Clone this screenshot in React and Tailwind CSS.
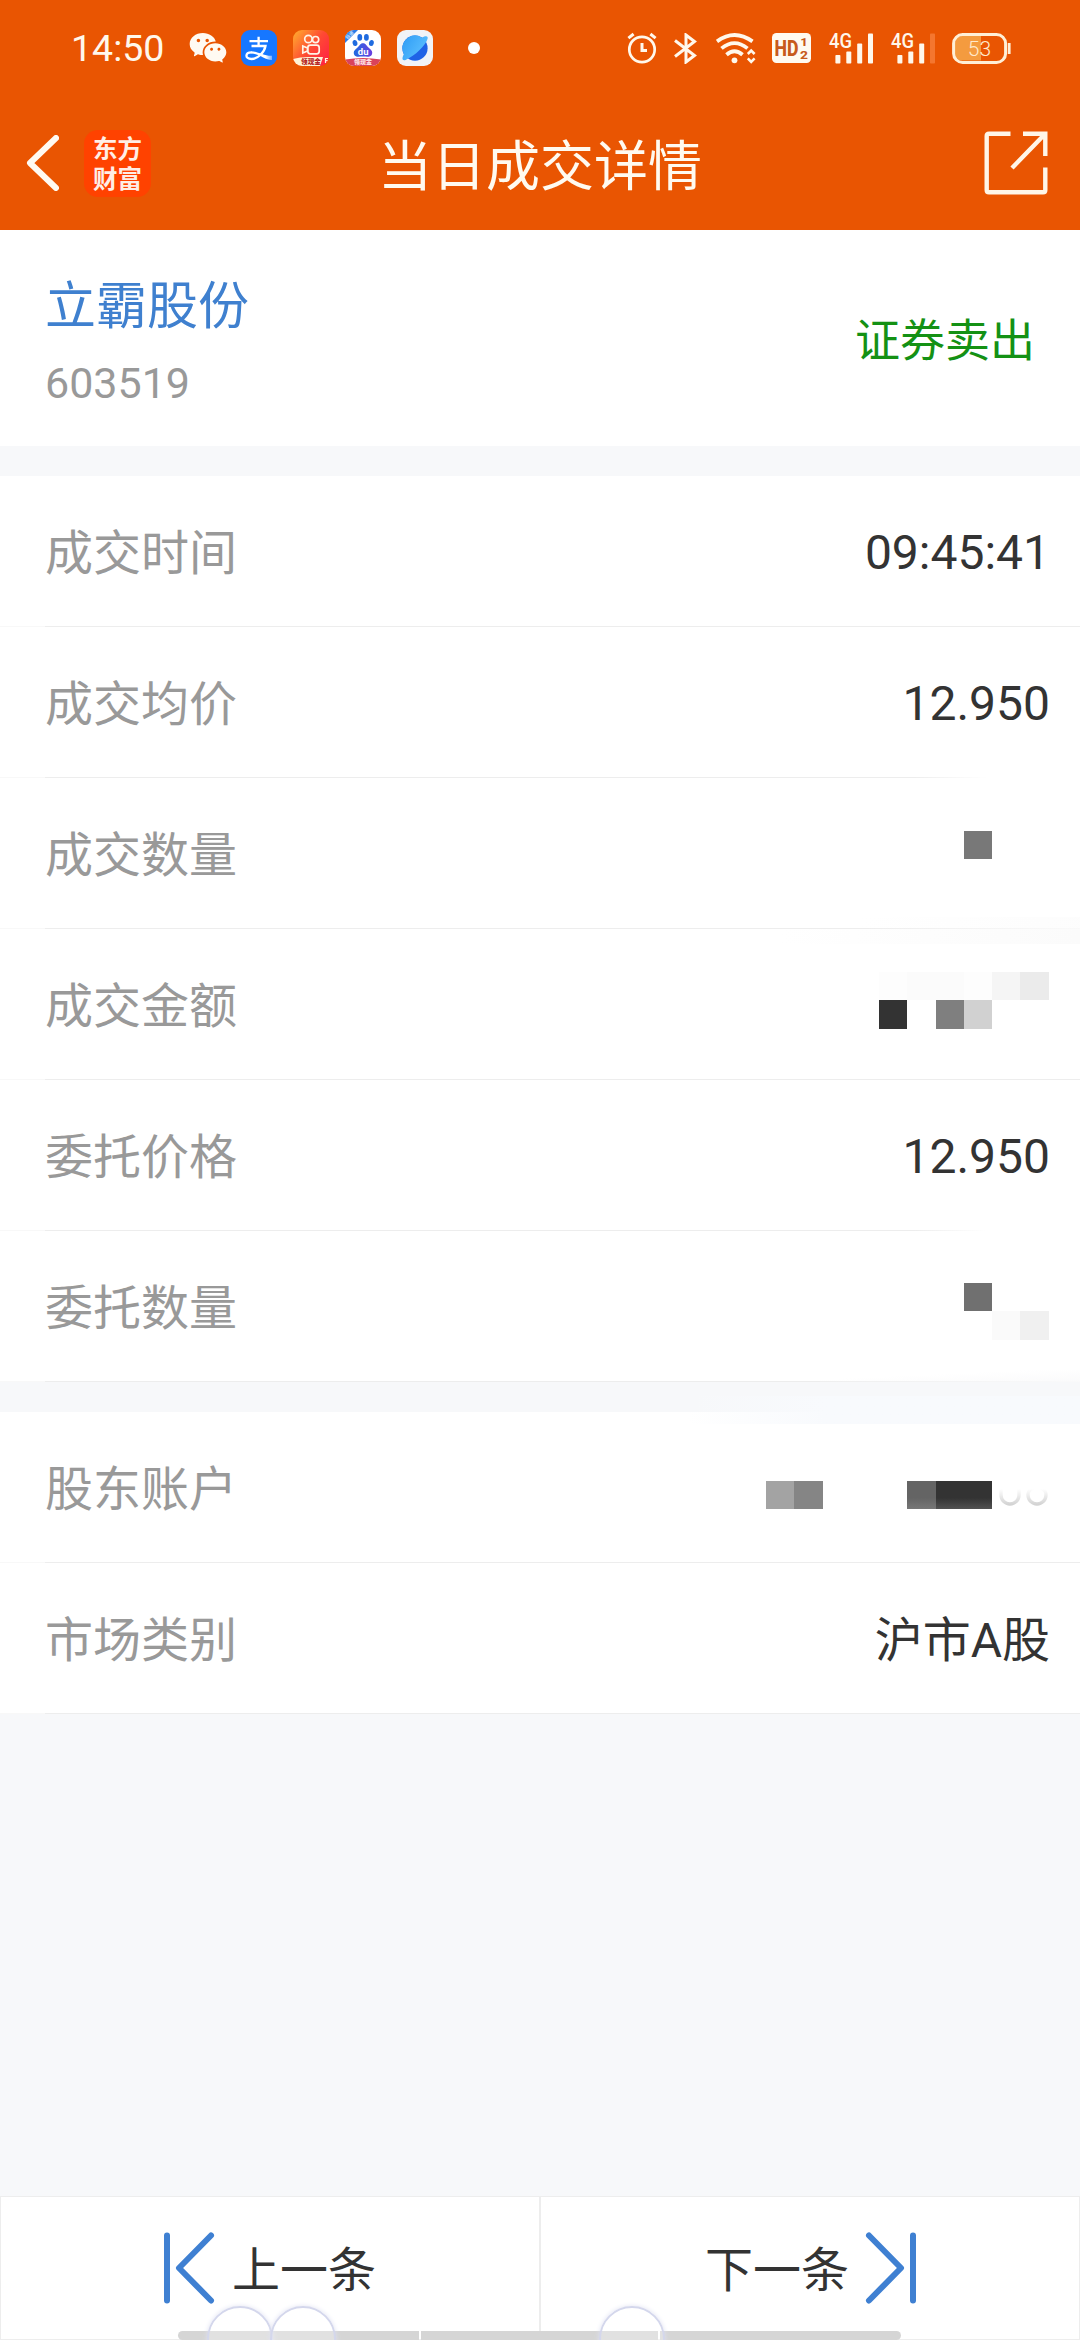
import React from "react";
import { RiWechatFill } from "react-icons/ri";

const sans = "font-['Roboto','Noto_Sans_CJK_SC',sans-serif]";
const cjk = "font-['Noto_Sans_CJK_SC',sans-serif]";

function AlipayIcon() {
  return (
    <svg viewBox="0 0 36 36" className="size-9">
      <defs>
        <linearGradient id="swoosh" x1="0" x2="1">
          <stop offset="0.7" stopColor="#fff" />
          <stop offset="1" stopColor="#fff" stopOpacity="0.4" />
        </linearGradient>
      </defs>
      <rect width="36" height="36" rx="9" fill="#1677ff" />
      <g fill="none" stroke="#fff" strokeWidth="2.3">
        <path d="M8.5 11.2H27M17.6 6.8V15.6M10.5 16H24.5C23.5 22 17 29 10.5 29C3.5 29 4 22.3 10.5 22.3" />
      </g>
      <path d="M10 21.2C17 21.4 23 26.2 31 25.8V30C24 30 18 23.6 10 23.4Z" fill="url(#swoosh)" />
    </svg>
  );
}

function KuaishouIcon() {
  return (
    <svg viewBox="0 0 36 36" className="size-9">
      <defs>
        <linearGradient id="ks" x1="0" y1="0" x2="1" y2="0.8">
          <stop offset="0" stopColor="#ffb02e" />
          <stop offset="0.55" stopColor="#ff4a33" />
          <stop offset="1" stopColor="#ff2442" />
        </linearGradient>
        <clipPath id="ksClip"><rect width="36" height="36" rx="9" /></clipPath>
      </defs>
      <g clipPath="url(#ksClip)">
        <rect width="36" height="36" fill="url(#ks)" />
        <g fill="none" stroke="#fff3e6" strokeWidth="1.7">
          <circle cx="15.4" cy="9" r="3.7" />
          <circle cx="22.6" cy="9.6" r="3.1" />
          <rect x="14.8" y="15.2" width="11.4" height="8.6" rx="2.6" />
          <path d="M14.5 18L9.8 16V23L14.5 21Z" />
        </g>
        <path d="M0 29Q8 26.6 18 27H30L27 36H0Z" fill="#fff3d6" />
        <text x="18" y="34" textAnchor="middle" fontSize="6.6" fontWeight="900" fill="#b3211c" fontFamily="Noto Sans CJK SC">领现金</text>
        <path d="M32.5 33V28.5H35M32.5 30.6H34.6" stroke="#fff3d6" strokeWidth="1.2" fill="none" />
      </g>
    </svg>
  );
}

function BaiduIcon() {
  return (
    <svg viewBox="0 0 36 36" className="size-9">
      <defs>
        <clipPath id="bdClip"><rect width="36" height="36" rx="9" /></clipPath>
        <linearGradient id="bd" x1="0" x2="1">
          <stop offset="0" stopColor="#1f6be0" />
          <stop offset="1" stopColor="#6a3fe0" />
        </linearGradient>
      </defs>
      <g clipPath="url(#bdClip)">
        <rect width="36" height="36" fill="#fff" />
        <path d="M0 0H13L0 13Z" fill="#2a7be8" />
        <text x="0" y="0" transform="translate(2.6 9.6) rotate(-45)" fontSize="4.6" fontWeight="700" fill="#bfe0ff" fontFamily="Noto Sans CJK SC">极速</text>
        <g fill="#1f6be0">
          <ellipse cx="10" cy="13" rx="2.4" ry="3.1" transform="rotate(-12 10 13)" />
          <ellipse cx="14.8" cy="7.4" rx="2.4" ry="3.3" />
          <ellipse cx="21.4" cy="7.4" rx="2.4" ry="3.3" />
          <ellipse cx="26.4" cy="13" rx="2.4" ry="3.1" transform="rotate(12 26.4 13)" />
        </g>
        <path d="M18 13.2C21 13.2 21.6 16 24 18C27 20.4 28 22 26.8 24.8C25.4 27.6 22 26.6 18 26.6S10.6 27.6 9.2 24.8C8 22 9 20.4 12 18C14.4 16 15 13.2 18 13.2Z" fill="url(#bd)" />
        <text x="18.2" y="25" textAnchor="middle" fontSize="9.5" fontWeight="700" fill="#fff" fontFamily="Roboto">du</text>
        <path d="M0 29.5Q18 26.5 36 29.5V36H0Z" fill="#d9435c" />
        <text x="18" y="34.2" textAnchor="middle" fontSize="6" fontWeight="900" fill="#ffe3e6" fontFamily="Noto Sans CJK SC">领现金</text>
      </g>
    </svg>
  );
}

function BrowserIcon() {
  return (
    <svg viewBox="0 0 36 36" className="size-9">
      <defs>
        <linearGradient id="pl" x1="0" y1="0" x2="1" y2="0.6">
          <stop offset="0" stopColor="#2f9cf5" />
          <stop offset="1" stopColor="#5cc0ff" />
        </linearGradient>
      </defs>
      <rect width="36" height="36" rx="9" fill="#f1f3f7" />
      <circle cx="18" cy="18.2" r="12.6" fill="#1f62e6" />
      <path d="M5.6 20.5A12.6 12.6 0 0 1 25 7.7C29 5.2 31.4 6 30.6 8.8C28.6 15.4 18 26 8.6 29.9C5.2 31 4.6 28.6 6.8 24.2Z" fill="url(#pl)" />
    </svg>
  );
}

function AlarmIcon() {
  return (
    <svg viewBox="0 0 30 32" className="h-8 w-[30px]" fill="none" stroke="#fff8ec">
      <circle cx="15" cy="17.5" r="12.7" strokeWidth="2.7" />
      <path d="M15 11V18.5H20" strokeWidth="3" />
      <path d="M1.4 6.2L6.6 2M28.6 6.2L23.4 2" strokeWidth="3" />
    </svg>
  );
}

function BluetoothIcon() {
  return (
    <svg viewBox="0 0 23 31" className="h-[31px] w-[23px]" fill="none" stroke="#fff8ec" strokeWidth="3">
      <path d="M1 7.5L20.5 22.5L12 29V2L20.5 8.5L1 23.5" />
    </svg>
  );
}

function WifiIcon() {
  return (
    <svg viewBox="0 0 40 31" className="h-[31px] w-10" fill="none" stroke="#fff8ec" strokeWidth="3.8">
      <path d="M1 8.4Q18.5 -4.4 36.5 8.4" />
      <path d="M5.5 15.4Q18.5 4.8 31.5 15.4" />
      <path d="M10.5 21.8Q18.5 14.8 26.5 21.8" />
      <circle cx="18.5" cy="27.3" r="2.9" fill="#fff8ec" stroke="none" />
      <path d="M31.8 21L35.2 17.6L38.6 21M31.8 25.4L35.2 28.8L38.6 25.4" strokeWidth="2.6" />
    </svg>
  );
}

function HdIcon() {
  return (
    <svg viewBox="0 0 39 30" className="h-[30px] w-[39px] overflow-visible">
      <rect width="39" height="30" rx="4.5" fill="#fffaf0" />
      <text x="2.4" y="23.2" fontSize="22.5" fontWeight="800" fill="#c75a1c" textLength="24" lengthAdjust="spacingAndGlyphs" fontFamily="Roboto">HD</text>
      <text x="28.2" y="13.2" fontSize="11" fontWeight="800" fill="#c75a1c" textLength="7.500" lengthAdjust="spacingAndGlyphs" fontFamily="Roboto">1</text>
      <text x="28" y="26" fontSize="11" fontWeight="800" fill="#c75a1c" textLength="8" lengthAdjust="spacingAndGlyphs" fontFamily="Roboto">2</text>
    </svg>
  );
}

function SignalIcon({ last }) {
  return (
    <svg viewBox="0 0 45 31" className="h-[31px] w-[45px] overflow-visible" fill="#fff8ec">
      <text x="0" y="15" fontSize="20" fontWeight="500" textLength="23" lengthAdjust="spacingAndGlyphs" fontFamily="Roboto">4G</text>
      <rect x="6.4" y="22" width="5" height="8.6" rx="0.8" />
      <rect x="17.3" y="18.6" width="5" height="12" rx="0.8" />
      <rect x="28.2" y="10.6" width="5" height="20" rx="0.8" />
      <rect x="39" y="0.5" width="5" height="30" rx="0.8" fill={last} />
    </svg>
  );
}

function BatteryIcon() {
  return (
    <svg viewBox="0 0 60 31" className="h-[31px] w-[60px]">
      <path d="M10 3H29V27.6H10A7 7 0 0 1 3 20V10A7 7 0 0 1 10 3Z" fill="#f49b3f" />
      <rect x="1.6" y="1.6" width="52" height="27.8" rx="9" fill="none" stroke="#ffefd6" strokeWidth="3" />
      <path d="M57.2 10V21" stroke="#ffefd6" strokeWidth="2.8" />
      <text x="27.4" y="22.6" textAnchor="middle" fontSize="21" fontWeight="300" fill="#ffe9cb" fontFamily="Roboto">53</text>
    </svg>
  );
}

function StatusBar() {
  return (
    <div className="flex h-24 items-center pr-[68px] pl-[71px]">
      <div className={`${sans} w-[117px] text-[37.5px] leading-[40px] text-[#fff8ec]`}>14:50</div>
      <RiWechatFill className="mr-[13px] size-10 text-[#fffaf2]" />
      <div className="flex gap-4">
        <AlipayIcon />
        <KuaishouIcon />
        <BaiduIcon />
        <BrowserIcon />
      </div>
      <div className="ml-[35px] size-3 rounded-full bg-white" />
      <div className="ml-auto flex items-center">
        <AlarmIcon />
        <div className="ml-[17px]"><BluetoothIcon /></div>
        <div className="ml-[19px]"><WifiIcon /></div>
        <div className="ml-4"><HdIcon /></div>
        <div className="ml-[18px]"><SignalIcon last="#fff8ec" /></div>
        <div className="ml-[17px]"><SignalIcon last="#f4762f" /></div>
        <div className="ml-4"><BatteryIcon /></div>
      </div>
    </div>
  );
}

function NavBar() {
  return (
    <div className="flex h-[134px] items-center justify-between pr-[32px] pl-[26px]">
      <div className="flex w-[131px] items-center gap-[25px]">
        <svg viewBox="0 0 33 56" className="h-14 w-[33px] shrink-0" fill="none" stroke="#fffaf2" strokeWidth="6" strokeLinecap="round" strokeLinejoin="round">
          <path d="M30 3L4 28L30 53" />
        </svg>
        <div className="flex size-[67px] flex-col items-center justify-center rounded-[14px] bg-[#ff4200] font-['Noto_Sans_CJK_SC',sans-serif] text-[24.5px] leading-[30px] font-bold text-[#ffeee6]">
          <span>东方</span>
          <span>财富</span>
        </div>
      </div>
      <div className={`${cjk} text-[54px] leading-[60px] text-[#fffaf0]`}>当日成交详情</div>
      <div className="flex w-[125px] justify-end">
        <svg viewBox="0 0 64 64" className="size-16" fill="none" stroke="#fff6e8" strokeWidth="4.4">
          <path d="M26.500 2.700H5Q2.700 2.700 2.700 5V59Q2.700 61.300 5 61.300H59Q61.300 61.300 61.300 59V36.500" />
          <path d="M39 2.700H61.300V25M61 3L28 37" />
        </svg>
      </div>
    </div>
  );
}

function Divider({ fade }) {
  return (
    <div className="flex h-px">
      <div className="w-[45px] bg-[#f8f8f8]" />
      <div className={fade ? "flex-1 bg-linear-to-r from-[#ededed] from-84% to-white to-91%" : "flex-1 bg-[#ededed]"} />
    </div>
  );
}

function Row({ label, value, numeric, fade, children }) {
  return (
    <div className="relative flex h-[151px] flex-col bg-white">
      <div className={`${sans} flex flex-1 items-center justify-between pr-[30px] pl-[45px] text-[48px] leading-[60px]`}>
        <span className="pt-[6px] text-[#999999]">{label}</span>
        <span className={numeric ? "pt-[3px] text-[#333333]" : "pt-[6px] text-[#333333]"}>{value}</span>
      </div>
      <Divider fade={fade} />
      {children}
    </div>
  );
}

function PagerButton({ children }) {
  return (
    <div className={`${cjk} flex h-36 flex-1 border border-[#ededed] bg-white text-[48px] leading-[60px] text-[#333333]`}>
      {children}
    </div>
  );
}

function Ring({ className }) {
  return <div className={`absolute top-[110px] size-[66px] rounded-full border-2 border-[#d4d7ec] bg-white/30 shadow-[0_0_5px_#dfe1f2] ${className}`} />;
}

export default function App() {
  return (
    <div className="flex h-[2340px] w-[1080px] flex-col overflow-hidden bg-[#f7f8fa]">
      <header className="h-[230px] bg-[#e95502]">
        <StatusBar />
        <NavBar />
      </header>

      <section className="mb-[30px] flex h-[216px] items-center justify-between bg-white pr-[45px] pl-[45px]">
        <div className="pt-[8px]">
          <div className={`${cjk} text-[51px] leading-[60px] text-[#3f80cf]`}>立霸股份</div>
          <div className={`${sans} mt-[21px] text-[43px] leading-[60px] text-[#999999]`}>603519</div>
        </div>
        <div className={`${cjk} text-[45px] leading-[60px] text-[#149114]`}>证券卖出</div>
      </section>

      <section>
        <Row label="成交时间" value="09:45:41" numeric />
        <Row label="成交均价" value="12.950" numeric fade />
        <Row label="成交数量">
          <div className="absolute top-[53px] right-[88px] size-7 bg-[#787878]" />
          <div className="absolute right-0 bottom-0 h-3 w-[220px] bg-linear-to-r from-transparent to-[#fcfcfc]/80" />
        </Row>
        <Row label="成交金额">
          <div className="absolute top-0 right-0 h-[15px] w-[300px] bg-linear-to-r from-white to-[#fbfbfb]" />
          <div className="absolute top-[43px] right-[31px] flex">
            <div className="h-7 w-7 bg-[#fdfdfd]" />
            <div className="h-7 w-[57px] bg-[#fbfbfb]" />
            <div className="h-7 w-7 bg-[#fdfdfd]" />
            <div className="h-7 w-7 bg-[#f5f5f5]" />
            <div className="h-7 w-[29px] bg-[#ebebeb]" />
          </div>
          <div className="absolute top-[71px] right-[88px] flex">
            <div className="h-[29px] w-7 bg-[#333333]" />
            <div className="ml-[29px] h-[29px] w-7 bg-[#7f7f7f]" />
            <div className="h-[29px] w-7 bg-[#d1d1d1]" />
          </div>
        </Row>
        <Row label="委托价格" value="12.950" numeric fade />
        <Row label="委托数量">
          <div className="absolute top-[52px] right-[88px] size-7 bg-[#707070]" />
          <div className="absolute top-[80px] right-[31px] flex">
            <div className="h-[29px] w-7 bg-[#fafafa]" />
            <div className="h-[29px] w-[29px] bg-[#f0f0f0]" />
          </div>
          <div className="absolute right-0 bottom-0 h-3 w-[260px] bg-linear-to-br from-transparent from-40% to-[#fafafb]" />
        </Row>
      </section>

      <section className="mt-[30px]">
        <Row label="股东账户">
          <div className="absolute -top-4 right-0 h-7 w-[392px] bg-linear-to-r from-transparent to-[#f8fafd] to-35%" />
          <div className="absolute top-[69px] right-[257px] flex">
            <div className="h-7 w-7 bg-[#a3a3a3]" />
            <div className="h-7 w-[29px] bg-[#858585]" />
          </div>
          <div className="absolute top-[69px] right-[88px] flex">
            <div className="h-7 w-[29px] bg-linear-to-b from-[#646464] from-60% to-[#777777]" />
            <div className="h-7 w-14 bg-linear-to-b from-[#333333] from-60% to-[#525252]" />
          </div>
          <svg viewBox="0 0 56 28" className="absolute top-[69px] right-[32px] h-7 w-14" fill="none" strokeWidth="3.4">
            <defs>
              <linearGradient id="digitFade" x1="0" x2="0" y1="8" y2="25" gradientUnits="userSpaceOnUse">
                <stop offset="0" stopColor="#fff" />
                <stop offset="1" stopColor="#cfcfcf" />
              </linearGradient>
            </defs>
            <path d="M9 8V14A9 9 0 0 0 27 14V8M36 14A9 9 0 1 0 54 14A9 8 0 0 0 36 14" stroke="url(#digitFade)" />
          </svg>
        </Row>
        <Row label="市场类别" value="沪市A股" />
      </section>

      <footer className="relative mt-auto flex">
        <PagerButton>
          <svg viewBox="0 0 52 72" className="mt-[35px] ml-[162px] h-[72px] w-[52px]" fill="none" stroke="#3f80d2" strokeWidth="6" strokeLinecap="round" strokeLinejoin="round">
            <path d="M4 3.500V68.500M48 3.500L16 36L48 68.500" />
          </svg>
          <span className="mt-[39px] ml-[17px]">上一条</span>
        </PagerButton>
        <PagerButton>
          <span className="mt-[39px] ml-[164px]">下一条</span>
          <svg viewBox="0 0 52 72" className="mt-[35px] ml-[16px] h-[72px] w-[52px]" fill="none" stroke="#3f80d2" strokeWidth="6" strokeLinecap="round" strokeLinejoin="round">
            <path d="M48 3.500V68.500M4 3.500L36 36L4 68.500" />
          </svg>
        </PagerButton>
        <div className="absolute bottom-0 left-[178px] flex h-[9px] w-[723px] gap-[2px]">
          <div className="w-[241px] rounded-l-full bg-[#d5d5d5]" />
          <div className="w-[237px] bg-[#d5d5d5]" />
          <div className="flex-1 rounded-r-full bg-[#d5d5d5]" />
        </div>
        <Ring className="left-[207px]" />
        <Ring className="left-[270px]" />
        <Ring className="left-[599px]" />
      </footer>
    </div>
  );
}
